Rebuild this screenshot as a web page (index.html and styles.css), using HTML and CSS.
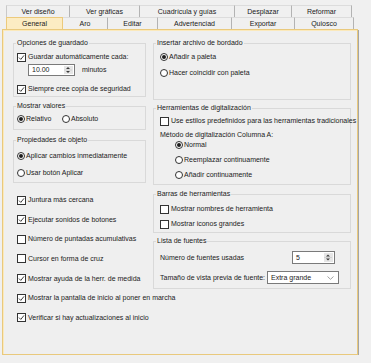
FILE: index.html
```html
<!DOCTYPE html>
<html lang="es">
<head>
<meta charset="utf-8">
<title>Opciones</title>
<link rel="stylesheet" href="styles.css">
</head>
<body>
<div class="dialog">
  <div class="tabs">
    <div class="tabrow row1">
      <div class="tab">Ver diseño</div>
      <div class="tab">Ver gráficas</div>
      <div class="tab">Cuadrícula y guías</div>
      <div class="tab">Desplazar</div>
      <div class="tab">Reformar</div>
    </div>
    <div class="tabrow row2">
      <div class="tab active">General</div>
      <div class="tab">Aro</div>
      <div class="tab">Editar</div>
      <div class="tab">Advertenciad</div>
      <div class="tab">Exportar</div>
      <div class="tab">Quiosco</div>
    </div>
  </div>
  <div class="panel">
    <div class="col">
      <fieldset class="grp g-save">
        <legend>Opciones de guardado</legend>
        <div class="opt"><span class="cb"><svg viewBox="0 0 7 7" width="7" height="7"><path d="M1 3.6 L2.8 5.4 L6 1.4"/></svg></span>Guardar automáticamente cada:</div>
        <div class="spinrow">
          <span class="spin s-min"><span class="val">10.00</span><span class="arrows"><svg viewBox="0 0 8 10" width="8" height="10"><path class="tri" d="M2 4 L4 2 L6 4 Z M2 6 L4 8 L6 6 Z"/><path class="sep" d="M0 5 H8"/></svg></span></span>
          <span class="unit">minutos</span>
        </div>
        <div class="opt o-copy"><span class="cb"><svg viewBox="0 0 7 7" width="7" height="7"><path d="M1 3.6 L2.8 5.4 L6 1.4"/></svg></span>Siempre cree copia de seguridad</div>
      </fieldset>

      <fieldset class="grp g-vals">
        <legend>Mostrar valores</legend>
        <div class="opt"><span class="pair"><span class="rb on"></span>Relativo</span><span class="rb"></span>Absoluto</div>
      </fieldset>

      <fieldset class="grp g-props">
        <legend>Propiedades de objeto</legend>
        <div class="opt"><span class="rb on"></span>Aplicar cambios inmediatamente</div>
        <div class="opt o-btn"><span class="rb"></span>Usar botón Aplicar</div>
      </fieldset>

      <div class="checks">
        <div class="opt"><span class="cb"><svg viewBox="0 0 7 7" width="7" height="7"><path d="M1 3.6 L2.8 5.4 L6 1.4"/></svg></span>Juntura más cercana</div>
        <div class="opt"><span class="cb"><svg viewBox="0 0 7 7" width="7" height="7"><path d="M1 3.6 L2.8 5.4 L6 1.4"/></svg></span>Ejecutar sonidos de botones</div>
        <div class="opt"><span class="cb"></span>Número de puntadas acumulativas</div>
        <div class="opt"><span class="cb"></span>Cursor en forma de cruz</div>
        <div class="opt"><span class="cb"><svg viewBox="0 0 7 7" width="7" height="7"><path d="M1 3.6 L2.8 5.4 L6 1.4"/></svg></span>Mostrar ayuda de la herr. de medida</div>
        <div class="opt"><span class="cb"><svg viewBox="0 0 7 7" width="7" height="7"><path d="M1 3.6 L2.8 5.4 L6 1.4"/></svg></span>Mostrar la pantalla de inicio al poner en marcha</div>
        <div class="opt"><span class="cb"><svg viewBox="0 0 7 7" width="7" height="7"><path d="M1 3.6 L2.8 5.4 L6 1.4"/></svg></span>Verificar si hay actualizaciones al inicio</div>
      </div>
    </div>

    <div class="col right">
      <fieldset class="grp g-insert">
        <legend>Insertar archivo de bordado</legend>
        <div class="opt"><span class="rb on"></span>Añadir a paleta</div>
        <div class="opt o-match"><span class="rb"></span>Hacer coincidir con paleta</div>
      </fieldset>

      <fieldset class="grp g-digit">
        <legend>Herramientas de digitalización</legend>
        <div class="opt"><span class="cb"></span>Use estilos predefinidos para las herramientas tradicionales</div>
        <div class="opt short o-label">Método de digitalización Columna A:</div>
        <div class="opt short indent"><span class="rb on"></span>Normal</div>
        <div class="opt short indent o-gap"><span class="rb"></span>Reemplazar continuamente</div>
        <div class="opt short indent o-gap"><span class="rb"></span>Añadir continuamente</div>
      </fieldset>

      <fieldset class="grp g-bars">
        <legend>Barras de herramientas</legend>
        <div class="opt"><span class="cb"></span>Mostrar nombres de herramienta</div>
        <div class="opt o-icons"><span class="cb"></span>Mostrar iconos grandes</div>
      </fieldset>

      <fieldset class="grp g-fonts">
        <legend>Lista de fuentes</legend>
        <div class="frow">
          <span>Número de fuentes usadas</span>
          <span class="spin s-fonts"><span class="val">5</span><span class="arrows"><svg viewBox="0 0 8 11" width="8" height="11"><path class="tri" d="M2 4.5 L4 2.5 L6 4.5 Z M2 6.5 L4 8.5 L6 6.5 Z"/><path class="sep" d="M0 5.5 H8"/></svg></span></span>
        </div>
        <div class="frow f-size">
          <span>Tamaño de vista previa de fuente:</span>
          <span class="combo"><span class="val">Extra grande</span><svg class="chev" viewBox="0 0 7 4" width="7" height="4"><path d="M0.5 0.5 L3.5 3.3 L6.5 0.5"/></svg></span>
        </div>
      </fieldset>
    </div>
  </div>
</div>
</body>
</html>
```

FILE: styles.css
```css
html, body {
  margin: 0;
  background: #f0f0f0;
}

body {
  font-family: "Liberation Sans", Arial, sans-serif;
  font-size: 7px;
  line-height: 8px;
  color: #1a1a1a;
}

.dialog {
  padding-top: 5px;
}

/* ---------- tabs ---------- */
.tabs {
  margin-left: 6px;
}

.tabrow {
  display: grid;
  height: 12px;
}

.row1 {
  grid-template-columns: 64px 70px 95px 57px 60px;
}

.row2 {
  grid-template-columns: 57px 45px 50px 74px 63px 59px;
}

.tab {
  display: flex;
  align-items: center;
  justify-content: center;
  box-sizing: border-box;
  border-top: 1px solid #dcdcdc;
  border-right: 1px solid #b3b3b3;
  white-space: nowrap;
}

.tab:first-child {
  border-left: 1px solid #c9c9c9;
}

.tab.active {
  background: #fcecc3;
  border: 1px solid #ecca7c;
  border-bottom: none;
}

/* ---------- panel ---------- */
.panel {
  margin-left: 2px;
  width: 356px;
  height: 326px;
  box-sizing: border-box;
  border: 1px solid #e9c97d;
  box-shadow: 1px 1px 0 #a5a5a5, inset 1px 1px 0 #fbe9bb;
  background: #efefef;
  padding: 9px 6px 0 10px;
  overflow: hidden;
  display: grid;
  grid-template-columns: 133px 198px;
  column-gap: 7px;
  align-items: start;
}

.col {
  display: flex;
  flex-direction: column;
  min-width: 0;
}

/* ---------- group boxes ---------- */
.grp {
  margin: 0;
  min-width: 0;
  border: 1px solid #d9d9d9;
  padding: 0 0 0 3px;
}

.grp legend {
  padding: 0 1px;
  margin-left: -1px;
  line-height: 8px;
  white-space: nowrap;
}

.right .grp {
  padding-left: 6px;
}

.right .grp legend {
  margin-left: -4px;
}

/* ---------- option rows ---------- */
.opt {
  display: flex;
  align-items: center;
  height: 12px;
  white-space: nowrap;
}

.opt.short {
  height: 10px;
}

.indent {
  padding-left: 15px;
}

.cb {
  flex: none;
  width: 9px;
  height: 9px;
  box-sizing: border-box;
  border: 1px solid #333;
  background: #fff;
  margin-right: 2px;
  display: flex;
  align-items: center;
  justify-content: center;
}

.cb svg path {
  fill: none;
  stroke: #2b2b2b;
  stroke-width: 0.9;
}

.rb {
  flex: none;
  width: 8px;
  height: 8px;
  box-sizing: border-box;
  border: 1px solid #333;
  border-radius: 50%;
  background: #fff;
  margin-right: 1px;
  display: flex;
  align-items: center;
  justify-content: center;
}

.rb.on::after {
  content: "";
  width: 4px;
  height: 4px;
  border-radius: 50%;
  background: #1e1e1e;
}

.pair {
  display: flex;
  align-items: center;
  width: 45px;
}

/* ---------- spin boxes / combo ---------- */
.spin,
.combo {
  display: flex;
  align-items: stretch;
  box-sizing: border-box;
  border: 1px solid #7a7a7a;
  background: #fff;
}

.spin .val,
.combo .val {
  flex: 1;
  display: flex;
  align-items: center;
  padding-left: 3px;
}

.arrows {
  flex: none;
  display: flex;
  align-items: center;
  width: 9px;
  margin: 1px 1px 1px 0;
  background: #e6e6e6;
  border: 0;
}

.arrows .tri {
  fill: #3a3a3a;
}

.arrows .sep {
  stroke: #c4c4c4;
  stroke-width: 0.6;
}

.spinrow {
  display: flex;
  align-items: center;
  height: 12px;
  margin-top: 1px;
}

.s-min {
  width: 47px;
  height: 12px;
  margin-left: 11px;
}

.unit {
  margin-left: 7px;
}

.frow {
  display: flex;
  align-items: center;
  justify-content: space-between;
  height: 13px;
  white-space: nowrap;
}

.s-fonts {
  width: 43px;
  height: 13px;
  margin-right: 15px;
}

.combo {
  width: 72px;
  height: 13px;
  margin-right: 11px;
  align-items: center;
}

.chev {
  flex: none;
  margin-right: 4px;
}

.chev path {
  fill: none;
  stroke: #8a8a8a;
  stroke-width: 0.8;
}

/* ---------- vertical rhythm: left ---------- */
.g-save {
  padding-top: 4px;
  padding-bottom: 1px;
}

.o-copy {
  margin-top: 7px;
}

.g-vals {
  margin-top: 5px;
  padding-top: 3px;
  padding-bottom: 4px;
}

.g-props {
  margin-top: 6px;
  padding-top: 6px;
  padding-bottom: 3px;
}

.o-btn {
  margin-top: 5px;
}

.checks {
  margin-top: 11px;
  padding-left: 4px;
  display: flex;
  flex-direction: column;
  gap: 7.667px;
}

/* ---------- vertical rhythm: right ---------- */
.g-insert {
  padding-top: 4px;
  padding-bottom: 20px;
}

.o-match {
  margin-top: 4px;
}

.g-digit {
  margin-top: 4px;
  padding-top: 3px;
  padding-bottom: 4px;
}

.o-label {
  margin-top: 3px;
}

.o-gap {
  margin-top: 5px;
}

.g-bars {
  margin-top: 5px;
  padding-top: 5px;
  padding-bottom: 2px;
}

.o-icons {
  margin-top: 3px;
}

.g-fonts {
  margin-top: 4px;
  padding-top: 6px;
  padding-bottom: 4px;
}

.f-size {
  margin-top: 7px;
}
```
